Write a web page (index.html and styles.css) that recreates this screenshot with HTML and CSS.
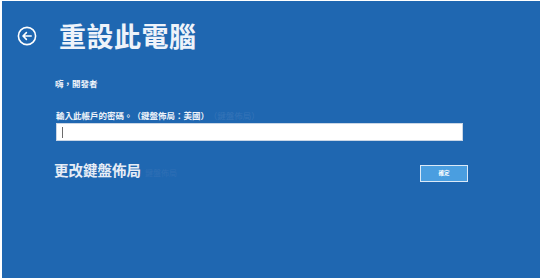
FILE: index.html
```html
<!DOCTYPE html>
<html lang="zh-Hant">
<head>
<meta charset="utf-8">
<link rel="stylesheet" href="styles.css">
</head>
<body>
<div class="screen">
  <header class="head">
    <svg class="back" width="20" height="20" viewBox="0 0 20 20">
      <circle cx="10" cy="10" r="8.6" fill="none" stroke="#fff" stroke-width="1.6"/>
      <path d="M14.2 10H6.2M9.4 6.6L6 10l3.4 3.4" fill="none" stroke="#fff" stroke-width="1.6" stroke-linecap="round" stroke-linejoin="round"/>
    </svg>
    <h1 class="title">重設此電腦</h1>
  </header>
  <main class="body">
    <p class="greet">嗨，開發者</p>
    <p class="label">輸入此帳戶的密碼。（鍵盤佈局：美國）<span class="ghost">（鍵盤佈局）</span></p>
    <div class="field"><span class="caret"></span></div>
    <div class="row">
      <span class="change">更改鍵盤佈局<span class="ghost2">鍵盤佈局</span></span>
      <button class="ok">確定</button>
    </div>
  </main>
</div>
</body>
</html>
```

FILE: styles.css
```css
html, body {
  margin: 0;
  padding: 0;
  background: #ffffff;
}
body {
  width: 543px;
  height: 280px;
  overflow: hidden;
  font-family: "Noto Sans CJK TC", "Noto Sans", sans-serif;
}
.screen {
  margin: 1px 3px 0 2px;
  height: 277px;
  background: #1f67b1;
  color: #eef3fa;
  box-sizing: border-box;
  padding: 0 0 0 15px;
}
.head {
  display: flex;
  align-items: center;
  height: 70px;
}
.back {
  display: block;
  flex: none;
}
.title {
  margin: -2px 0 0 22px;
  font-size: 27px;
  font-weight: 700;
  letter-spacing: 0.5px;
  line-height: 1;
  color: #eef3fa;
}
.body {
  padding-left: 37px;
}
.greet {
  margin: 6px 0 0 1px;
  font-size: 8.5px;
  font-weight: 700;
  line-height: 12px;
}
.label {
  margin: 20px 0 0 2px;
  font-size: 8.5px;
  font-weight: 700;
  line-height: 12px;
  white-space: nowrap;
}
.ghost {
  color: #3574b8;
  font-weight: 400;
  margin-left: 4px;
}
.field {
  margin: 2px 0 0 2px;
  width: 400px;
  height: 16px;
  background: #ffffff;
  border: 1px solid #c9d6e6;
  display: flex;
  align-items: center;
  padding-left: 5px;
}
.caret {
  width: 1px;
  height: 11px;
  background: #6b6b6b;
}
.row {
  display: flex;
  align-items: center;
  justify-content: space-between;
  margin-top: 20px;
  width: 414px;
}
.change {
  font-size: 14.5px;
  font-weight: 700;
  line-height: 18px;
  color: #e7edf6;
  white-space: nowrap;
}
.ghost2 {
  color: #2f6fb5;
  font-size: 8px;
  font-weight: 400;
  margin-left: 4px;
}
.ok {
  width: 48px;
  height: 17px;
  margin-top: 4px;
  padding: 0;
  background: #4a9ee0;
  border: 1.5px solid #dbe9f7;
  color: #ffffff;
  font-family: inherit;
  font-size: 5.5px;
  font-weight: 700;
  line-height: 1;
}
```
